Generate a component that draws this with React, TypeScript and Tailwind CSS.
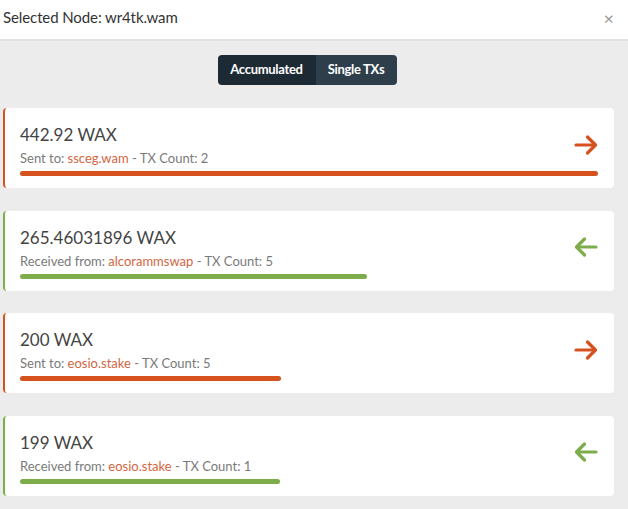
import React from "react";

type Tx = { amount: string; dir: "out" | "in"; who: string; count: number; pct: number };

const txs: Tx[] = [
  { amount: "442.92 WAX", dir: "out", who: "ssceg.wam", count: 2, pct: 100 },
  { amount: "265.46031896 WAX", dir: "in", who: "alcorammswap", count: 5, pct: 60 },
  { amount: "200 WAX", dir: "out", who: "eosio.stake", count: 5, pct: 45.2 },
  { amount: "199 WAX", dir: "in", who: "eosio.stake", count: 1, pct: 45 },
];

function Arrow({ dir, color }: { dir: "out" | "in"; color: string }) {
  return (
    <svg width="24" height="24" viewBox="0 0 24 24" fill="none" stroke={color} strokeWidth="3.2" strokeLinecap="round" strokeLinejoin="round">
      {dir === "out" ? (
        <>
          <path d="M2 12h19" />
          <path d="M13.5 4l8 8-8 8" />
        </>
      ) : (
        <>
          <path d="M22 12H3" />
          <path d="M10.5 4l-8 8 8 8" />
        </>
      )}
    </svg>
  );
}

export default function App() {
  return (
    <div className="w-[628px] h-[509px] bg-[#ececec] overflow-hidden" style={{ fontFamily: "Lato, 'Open Sans', sans-serif" }}>
      <div className="h-[41px] bg-white flex items-center justify-between pl-[3px] pr-[14px] pb-[4px] border-b-2 border-[#e2e2e2]">
        <span className="text-[15px] text-[#333] tracking-[-0.1px]">Selected Node: wr4tk.wam</span>
        <span className="text-[18px] text-[#999] leading-none">×</span>
      </div>
      <div className="w-[614px]">
        <div className="flex justify-center pt-[14px]">
          <div className="flex h-[30px] rounded-[4px] overflow-hidden text-white text-[13px] font-bold">
            <div className="bg-[#1d2a33] w-[98px] flex items-center justify-center tracking-[-0.3px]">Accumulated</div>
            <div className="bg-[#2e3f4b] w-[81px] flex items-center justify-center tracking-[-0.3px]">Single TXs</div>
          </div>
        </div>
        <div className="flex flex-col gap-[22.5px] pt-[23px] pl-[3px]">
          {txs.map((t, i) => {
            const color = t.dir === "out" ? "#d5521f" : "#7dad4a";
            return (
              <div
                key={i}
                className={`h-[80px] bg-white rounded-[4px] border-l-2 flex flex-col pt-[16px] pl-[15px] pr-[16px] ${t.dir === "out" ? "border-[#d5521f]" : "border-[#7dad4a]"}`}
              >
                <div className="flex items-center">
                  <div className="flex-1 flex flex-col">
                    <div className="text-[17px] text-[#444] leading-[22px]">{t.amount}</div>
                    <div className="text-[13px] text-[#7a7a7a] leading-[18px] mt-[3px]">
                      {t.dir === "out" ? "Sent to: " : "Received from: "}
                      <span className="text-[#d2663f]">{t.who}</span> - TX Count: {t.count}
                    </div>
                  </div>
                  <div className="mt-[-2px]">
                    <Arrow dir={t.dir} color={color} />
                  </div>
                </div>
                <div className="mt-[4px] h-[5px] rounded-full" style={{ width: `${t.pct}%`, backgroundColor: color }} />
              </div>
            );
          })}
        </div>
      </div>
    </div>
  );
}
